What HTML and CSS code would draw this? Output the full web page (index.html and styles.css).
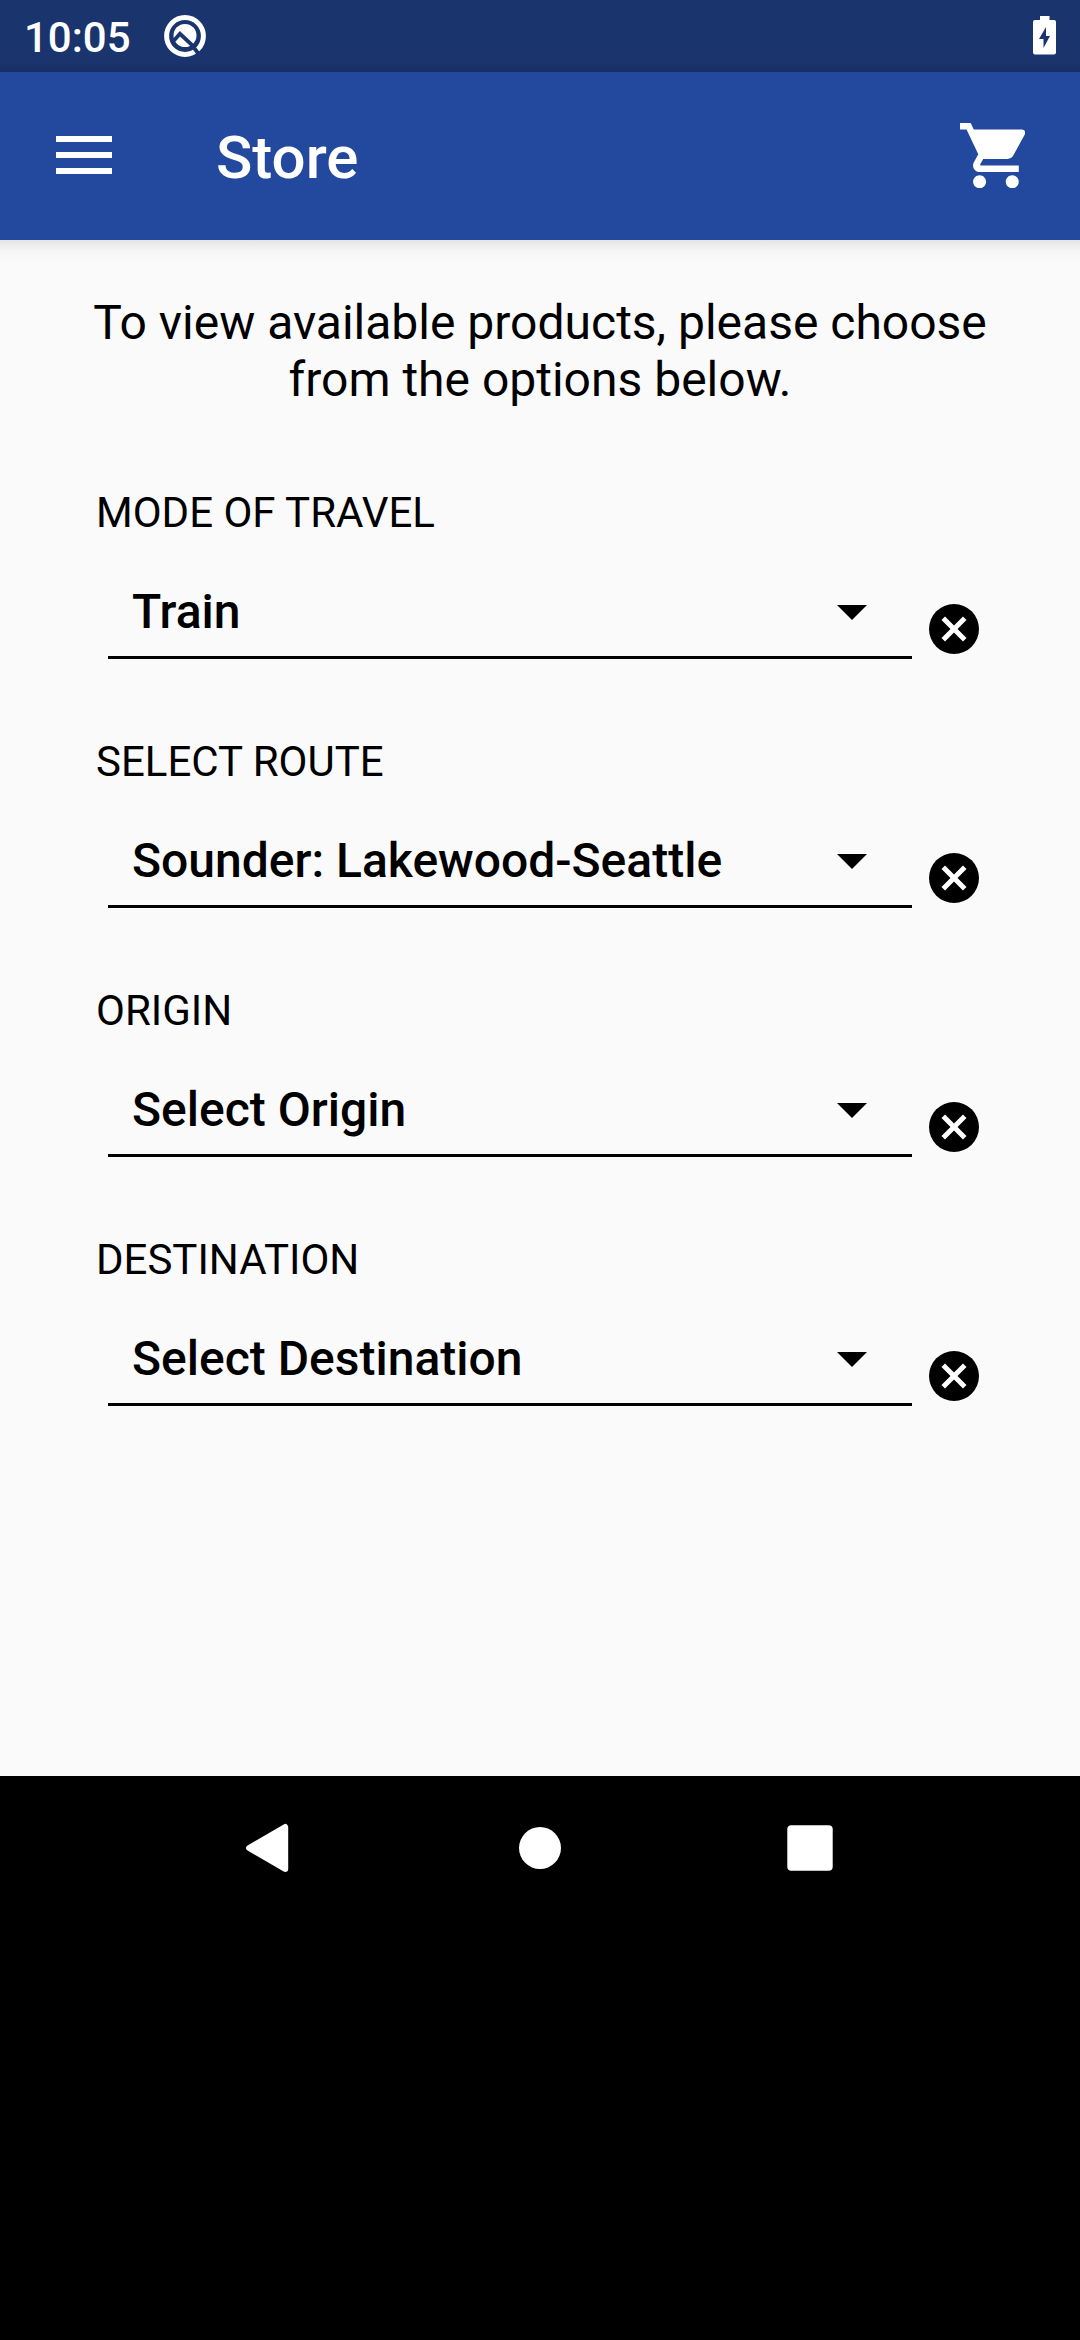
FILE: index.html
```html
<!DOCTYPE html>
<html lang="en">
<head>
<meta charset="utf-8">
<title>Store</title>
<link rel="stylesheet" href="styles.css">
</head>
<body>
<svg class="defs" width="0" height="0" aria-hidden="true">
  <symbol id="arrow" viewBox="0 0 30 15"><path d="M0 0h30L15 15z"/></symbol>
  <symbol id="cancel" viewBox="2 2 20 20">
    <circle cx="12" cy="12" r="10"/>
    <path fill="#fff" d="M17 15.590 15.590 17 12 13.410 8.410 17 7 15.590 10.590 12 7 8.410 8.410 7 12 10.590 15.590 7 17 8.410 13.410 12z"/>
  </symbol>
</svg>
<div class="status-bar">
  <div class="status-left">
    <span class="clock">10:05</span>
    <svg class="notification" viewBox="0 0 42 42">
      <circle cx="21" cy="21" r="18.400" fill="none" stroke="#fff" stroke-width="5"/>
      <circle cx="21" cy="20.500" r="11.500" fill="#fff"/>
      <path d="M10 25.500 16 18.800 28 30 35 39.500" fill="none" stroke="#1a346d" stroke-width="3.800"/>
    </svg>
  </div>
  <svg class="battery" viewBox="0 0 23 39">
    <path fill="#fff" d="M7 0h9.500v4H21a2 2 0 0 1 2 2v30.500a2 2 0 0 1-2 2H2a2 2 0 0 1-2-2V6a2 2 0 0 1 2-2h5z"/>
    <path fill="#1a346d" d="M13 11v9h4L10.500 32v-9H6z"/>
  </svg>
</div>
<header class="app-bar">
  <svg class="menu" viewBox="0 0 56 38"><path fill="#fff" d="M0 0h56v6H0zM0 16h56v6H0zM0 32h56v6H0z"/></svg>
  <h1 class="title">Store</h1>
  <svg class="cart" viewBox="1 2 20 20"><path fill="#fff" d="M7 18c-1.100 0-1.990.9-1.990 2S5.900 22 7 22s2-.9 2-2-.9-2-2-2zM1 2v2h2l3.600 7.590-1.350 2.450c-.16.280-.25.610-.25.960 0 1.100.9 2 2 2h12v-2H7.420c-.14 0-.25-.11-.25-.25l.03-.12.9-1.630h7.450c.75 0 1.410-.41 1.750-1.030l3.580-6.490c.08-.14.12-.31.12-.48 0-.55-.45-1-1-1H5.210l-.94-2H1zm16 16c-1.100 0-1.990.9-1.990 2s.89 2 1.990 2 2-.9 2-2-.9-2-2-2z"/></svg>
</header>
<main class="content">
  <p class="intro">To view available products, please choose<br>from the options below.</p>
  <form class="fields">
    <div class="field">
      <span class="label">MODE OF TRAVEL</span>
      <div class="row">
        <div class="select"><span>Train</span><svg class="arrow"><use href="#arrow"/></svg></div>
        <svg class="clear"><use href="#cancel"/></svg>
      </div>
    </div>
    <div class="field">
      <span class="label">SELECT ROUTE</span>
      <div class="row">
        <div class="select"><span>Sounder: Lakewood-Seattle</span><svg class="arrow"><use href="#arrow"/></svg></div>
        <svg class="clear"><use href="#cancel"/></svg>
      </div>
    </div>
    <div class="field">
      <span class="label">ORIGIN</span>
      <div class="row">
        <div class="select"><span>Select Origin</span><svg class="arrow"><use href="#arrow"/></svg></div>
        <svg class="clear"><use href="#cancel"/></svg>
      </div>
    </div>
    <div class="field">
      <span class="label">DESTINATION</span>
      <div class="row">
        <div class="select"><span>Select Destination</span><svg class="arrow"><use href="#arrow"/></svg></div>
        <svg class="clear"><use href="#cancel"/></svg>
      </div>
    </div>
  </form>
</main>
<nav class="nav-bar">
  <svg class="nav-icon" viewBox="0 0 50 50"><path fill="#fff" stroke="#fff" stroke-width="6" stroke-linejoin="round" d="M4.100 25 40.200 4v42z"/></svg>
  <svg class="nav-icon" viewBox="0 0 50 50"><circle cx="25" cy="25" r="21" fill="#fff"/></svg>
  <svg class="nav-icon" viewBox="0 0 50 50"><rect x="2.300" y="2.300" width="45.400" height="45.400" rx="4" fill="#fff"/></svg>
</nav>
</body>
</html>
```
FILE: styles.css
```css
* { box-sizing: border-box; }

body {
  margin: 0;
  width: 1080px;
  height: 2340px;
  display: flex;
  flex-direction: column;
  background: #000;
  color: #000;
  font-family: Roboto, "Liberation Sans", sans-serif;
  overflow: hidden;
}

svg { display: block; flex: none; }
.defs { display: none; }

.status-bar {
  flex: none;
  height: 72px;
  padding: 0 24px;
  display: flex;
  justify-content: space-between;
  align-items: flex-start;
  background: linear-gradient(#1a346d 62px, #182e60 72px);
}
.status-left { display: flex; gap: 33px; }
.clock {
  padding-top: 13px;
  color: #fff;
  font-size: 42px;
  font-weight: 500;
  line-height: 50px;
}
.notification { width: 42px; height: 42px; margin-top: 15px; }
.battery { width: 23px; height: 39px; margin-top: 16px; }

.app-bar {
  flex: none;
  height: 168px;
  padding: 0 54.700px 0 56px;
  display: flex;
  align-items: flex-start;
  background: #23499e;
}
.menu { width: 56px; height: 38px; margin-top: 64px; }
.title {
  margin: 51px 0 0 104px;
  flex: 1;
  color: #fff;
  font-size: 60px;
  font-weight: 500;
  line-height: 70px;
}
.cart { width: 65.300px; height: 65.300px; margin-top: 51px; }

.content {
  flex: none;
  height: 1536px;
  padding: 54px 96px 0;
  background: linear-gradient(#e4e4e4, #f4f4f4 10px, #fafafa 22px);
}
.intro {
  margin: 0 -20px;
  text-align: center;
  font-size: 48px;
  line-height: 57px;
}
.fields { margin-top: 80px; display: flex; flex-direction: column; gap: 78px; }
.label { display: block; height: 50px; font-size: 42px; line-height: 50px; }
.row { display: flex; height: 121px; align-items: flex-end; }
.select {
  width: 804px;
  height: 76px;
  margin-left: 12px;
  padding: 0 45px 16px 24px;
  display: flex;
  align-items: flex-start;
  justify-content: space-between;
  border-bottom: 3px solid #000;
  font-size: 48px;
  font-weight: 500;
  line-height: 57px;
}
.arrow { width: 30px; height: 15px; margin-top: 22px; }
.clear { width: 50px; height: 50px; margin: 0 0 5px 17px; }

.nav-bar {
  flex: none;
  height: 144px;
  display: flex;
  justify-content: center;
  align-items: center;
  gap: 220px;
}
.nav-icon { width: 50px; height: 50px; }
```
